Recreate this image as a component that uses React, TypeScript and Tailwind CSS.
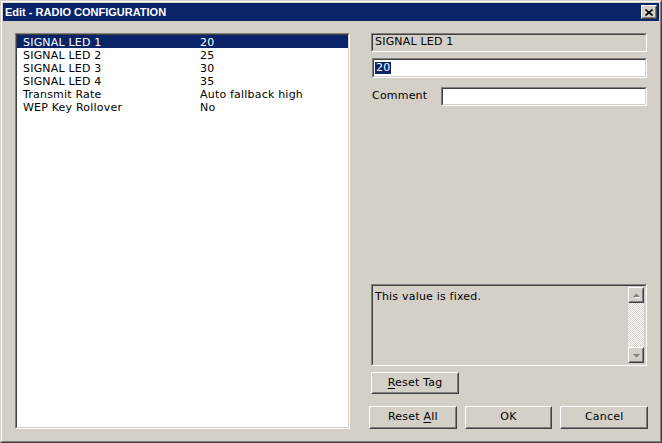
import React from "react";

const rows = [
  ["SIGNAL LED 1", "20"],
  ["SIGNAL LED 2", "25"],
  ["SIGNAL LED 3", "30"],
  ["SIGNAL LED 4", "35"],
  ["Transmit Rate", "Auto fallback high"],
  ["WEP Key Rollover", "No"],
];

function Sunken({ className = "", inner = "", children }: { className?: string; inner?: string; children?: React.ReactNode }) {
  return (
    <div className={`border border-t-[#808080] border-l-[#808080] border-b-white border-r-white ${className}`}>
      <div className={`h-full border border-t-[#404040] border-l-[#404040] border-b-[#d4d0c8] border-r-[#d4d0c8] ${inner}`}>
        {children}
      </div>
    </div>
  );
}

function Raised({ className = "", children }: { className?: string; children?: React.ReactNode }) {
  return (
    <div className={`border border-t-white border-l-white border-b-[#404040] border-r-[#404040] bg-[#d4d0c8] ${className}`}>
      <div className="h-full border border-t-[#d4d0c8] border-l-[#d4d0c8] border-b-[#808080] border-r-[#808080] flex items-center justify-center">
        {children}
      </div>
    </div>
  );
}

function Arrow({ up }: { up?: boolean }) {
  return (
    <svg width="7" height="5" viewBox="0 0 7 5">
      {up ? (
        <>
          <path d="M1 4h5.8L3.9 1z" fill="#fff" transform="translate(1 1)" />
          <path d="M0 4h7L3.5 0.5z" fill="#808080" />
        </>
      ) : (
        <>
          <path d="M0 1h7L3.5 4.5z" fill="#808080" />
        </>
      )}
    </svg>
  );
}

export default function App() {
  return (
    <div className="w-[662px] h-[443px] bg-[#d4d0c8] border border-t-[#d4d0c8] border-l-[#d4d0c8] border-b-[#404040] border-r-[#404040] font-['DejaVu_Sans',sans-serif] text-[11px] text-black tracking-[0.2px]">
      <div className="h-full border border-t-white border-l-white border-b-[#808080] border-r-[#808080] p-px flex flex-col">
        {/* Title bar */}
        <div className="h-[18px] bg-[#0a246a] flex items-center justify-between pl-[2px] pr-[2px]">
          <span className="font-['Liberation_Sans',sans-serif] font-bold text-white text-[11px] tracking-normal">
            Edit - RADIO CONFIGURATION
          </span>
          <Raised className="w-[16px] h-[14px]">
            <svg width="8" height="7" viewBox="0 0 8 7">
              <path d="M0.5 0.5l7 6M7.5 0.5l-7 6" stroke="#000" strokeWidth="1.6" />
            </svg>
          </Raised>
        </div>

        <div className="flex-1 flex pt-[12px] pl-[12px] pr-[11px] pb-[11px] gap-[19px]">
          {/* List */}
          <Sunken className="w-[335px] h-[396px]" inner="bg-white">
            {rows.map(([k, v], i) => (
              <div
                key={k}
                className={`h-[13px] flex pt-[2px] leading-[11px] ${i === 0 ? "bg-[#0a246a] text-white" : ""}`}
              >
                <span className="pl-[6px] w-[183px] shrink-0 whitespace-nowrap">{k}</span>
                <span className="whitespace-nowrap">{v}</span>
              </div>
            ))}
          </Sunken>

          {/* Right column */}
          <div className="w-[279px] flex flex-col">
            <Sunken className="ml-[2px] mr-[1px] h-[19px]" inner="flex items-center pl-[2px]">
              SIGNAL LED 1
            </Sunken>
            <Sunken className="ml-[3px] mr-[1px] mt-[6px] h-[20px]" inner="bg-white flex items-center pl-[1px]">
              <span className="bg-[#0a246a] text-white px-px leading-[12px]">20</span>
            </Sunken>
            <div className="mt-[9px] flex items-center h-[19px]">
              <span className="ml-[3px] w-[69px]">Comment</span>
              <Sunken className="flex-1 mr-[1px] h-[19px]" inner="bg-white" />
            </div>

            <div className="flex-1" />

            <Sunken className="ml-[2px] mr-[1px] h-[82px]" inner="flex">
              <div className="flex-1 pl-[2px] pt-[3px]">This value is fixed.</div>
              <div className="w-[16px] flex flex-col py-px mr-px">
                <Raised className="h-[16px]">
                  <Arrow up />
                </Raised>
                <div className="flex-1 bg-[repeating-conic-gradient(#d4d0c8_0_25%,#ffffff_0_50%)] bg-[length:2px_2px]" />
                <Raised className="h-[16px]">
                  <Arrow />
                </Raised>
              </div>
            </Sunken>

            <Raised className="ml-[2px] mt-[6px] w-[88px] h-[22px]">
              <span>
                <span className="underline underline-offset-2">R</span>eset Tag
              </span>
            </Raised>

            <div className="mt-[12px] flex gap-[8px]">
              <Raised className="w-[88px] h-[23px]">
                <span>
                  Reset <span className="underline underline-offset-2">A</span>ll
                </span>
              </Raised>
              <Raised className="w-[88px] h-[23px]">OK</Raised>
              <Raised className="w-[88px] h-[23px]">Cancel</Raised>
            </div>
          </div>
        </div>
      </div>
    </div>
  );
}
